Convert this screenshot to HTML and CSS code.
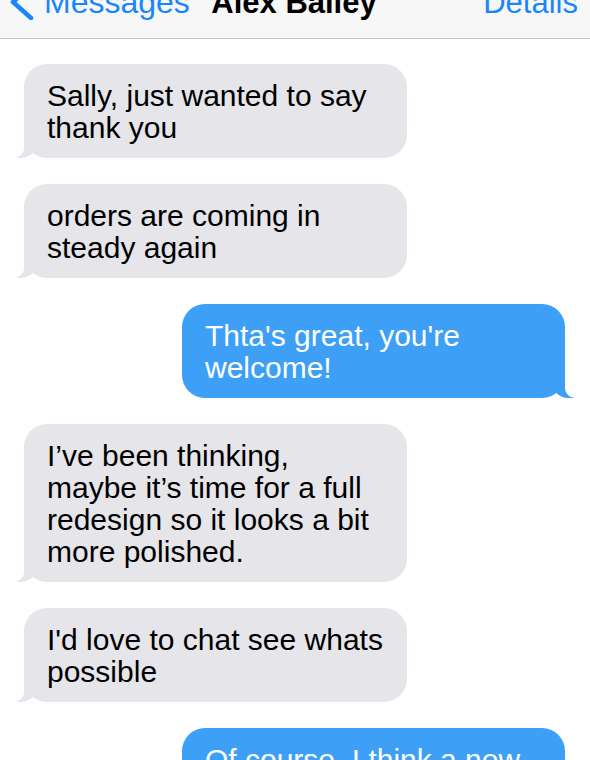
FILE: index.html
```html
<!DOCTYPE html>
<html lang="en">
<head>
    <meta charset="UTF-8">
    <meta name="viewport" content="width=device-width, initial-scale=1.0">
    <title>Alex Bailey</title>
    <link rel="stylesheet" href="styles.css">
</head>
<body>
    <header class="nav">
        <div class="nav-row">
            <a class="nav-back" href="#">
                <svg class="chevron" width="24" height="36" viewBox="0 0 24 36">
                    <polyline points="21,2 3,18 21,34" fill="none" stroke="#1a86fb" stroke-width="4.5" stroke-linecap="round" stroke-linejoin="round"/>
                </svg>
                <span>Messages</span>
            </a>
            <div class="nav-title">Alex Bailey</div>
            <a class="nav-details" href="#">Details</a>
        </div>
    </header>

    <main class="thread">
        <div class="msg in">Sally, just wanted to say thank you</div>
        <div class="msg in">orders are coming in steady again</div>
        <div class="msg out">Thta's great, you're welcome!</div>
        <div class="msg in">I’ve been thinking,<br>maybe it’s time for a full redesign so it looks a bit more polished.</div>
        <div class="msg in">I'd love to chat see whats possible</div>
        <div class="msg out">Of course, I think a new design would be great!</div>
    </main>
</body>
</html>
```

FILE: styles.css
```css
/* Page */
body {
    margin: 0;
    padding: 0;
    font-family: 'Liberation Sans', Arial, sans-serif;
    background-color: #fff;
    color: #000;
    overflow: hidden;
}

/* Top navigation bar */
.nav {
    height: 38px;
    background-color: #f7f7f8;
    border-bottom: 1px solid #c9c9cd;
    overflow: hidden;
}

.nav-row {
    display: grid;
    grid-template-columns: 1fr auto 1fr;
    align-items: center;
    height: 31px;
    margin-top: -16px;
    padding: 0 12px 0 10px;
    font-size: 31px;
    line-height: 31px;
}

.nav a {
    color: #1a86fb;
    text-decoration: none;
}

.nav-back {
    display: flex;
    align-items: center;
    gap: 10px;
    font-size: 32px;
}

.chevron {
    flex-shrink: 0;
}

.nav-title {
    font-weight: bold;
}

.nav-details {
    justify-self: end;
}

/* Conversation */
.thread {
    display: flex;
    flex-direction: column;
    gap: 26px;
    padding: 25px 25px 0 24px;
}

.msg {
    position: relative;
    box-sizing: border-box;
    width: 383px;
    padding: 16px 23px 14px;
    border-radius: 23px;
    font-size: 30px;
    line-height: 32px;
}

.msg.in {
    align-self: flex-start;
    background-color: #e5e5ea;
    color: #000;
}

.msg.out {
    align-self: flex-end;
    background-color: #3d9ff6;
    color: #fff;
}

/* bubble tails */
.msg::before,
.msg::after {
    content: "";
    position: absolute;
    bottom: 0;
    height: 22px;
}

.msg.in::before {
    left: -9px;
    width: 22px;
    background-color: #e5e5ea;
    border-bottom-right-radius: 16px;
}

.msg.in::after {
    left: -12px;
    width: 12px;
    background-color: #fff;
    border-bottom-right-radius: 10px;
}

.msg.out::before {
    right: -9px;
    width: 22px;
    background-color: #3d9ff6;
    border-bottom-left-radius: 16px;
}

.msg.out::after {
    right: -12px;
    width: 12px;
    background-color: #fff;
    border-bottom-left-radius: 10px;
}
```
